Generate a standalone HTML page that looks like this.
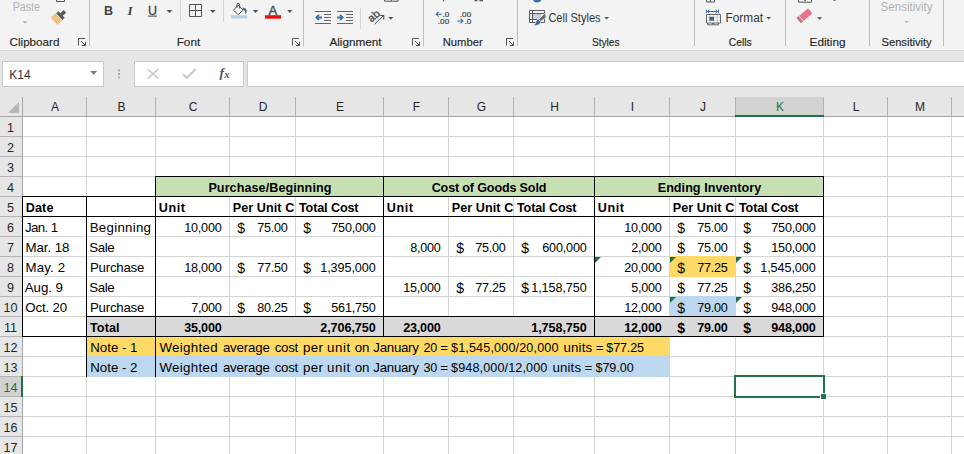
<!DOCTYPE html>
<html><head><meta charset="utf-8"><title>Book1 - Excel</title>
<style>
html,body{margin:0;padding:0;}
body{width:964px;height:454px;overflow:hidden;position:relative;background:#fff;font-family:"Liberation Sans",sans-serif;}
#ribbon{position:absolute;left:0;top:0;width:964px;height:50px;background:#f3f3f3;}
#rline{position:absolute;left:0;top:50px;width:964px;height:1px;background:#d9d9d9;}
#fbar{position:absolute;left:0;top:51px;width:964px;height:46px;background:#e6e6e6;}
.box{position:absolute;background:#fff;border:1px solid #c9c9c9;box-sizing:border-box;}
#grid{position:absolute;left:0;top:0;width:964px;height:454px;}
.hl,.vl,.f,.c,.ch,.rh{position:absolute;}
.hl{height:1px;background:#d4d4d4;}
.vl{width:1px;background:#d4d4d4;}
.k{background:#000;}
.c{height:19px;line-height:22px;font-size:13.3px;color:#000;white-space:pre;overflow:hidden;}
.c span{position:absolute;top:0;}
.b{font-weight:bold;font-size:12.6px;}
.n{font-size:12.6px;}
.d{font-size:14px;}
.ch{top:97px;height:19px;line-height:21px;font-size:12px;text-indent:1px;color:#262626;text-align:center;}
.rh{left:0;width:21px;height:19px;line-height:23px;font-size:12.6px;color:#262626;text-align:center;}
.tri{position:absolute;width:0;height:0;border-top:6px solid #1e7145;border-right:6px solid transparent;}
svg{position:absolute;left:0;top:0;}
</style></head><body>

<div id="ribbon"></div><div id="rline"></div><div id="fbar"></div>
<div class="box" style="left:2px;top:61px;width:102px;height:26px;"></div>
<div class="box" style="left:134px;top:61px;width:110px;height:26px;"></div>
<div class="box" style="left:247px;top:61px;width:730px;height:26px;"></div>
<div id="grid">
<div class="f" style="left:0;top:97px;width:964px;height:20px;background:#e6e6e6"></div>
<div class="f" style="left:0;top:117px;width:22px;height:340px;background:#e6e6e6"></div>
<div class="f" style="left:736px;top:97px;width:87px;height:18px;background:#d2d2d2"></div>
<div class="f" style="left:0;top:377px;width:21px;height:19px;background:#d2d2d2"></div>
<div class="f" style="left:8px;top:102px;width:0;height:0;border-bottom:11px solid #b7b7b7;border-left:11px solid transparent;"></div>
<div class="vl" style="left:86px;top:117px;height:340px"></div>
<div class="vl" style="left:155px;top:117px;height:340px"></div>
<div class="vl" style="left:229px;top:117px;height:340px"></div>
<div class="vl" style="left:295px;top:117px;height:340px"></div>
<div class="vl" style="left:383px;top:117px;height:340px"></div>
<div class="vl" style="left:448px;top:117px;height:340px"></div>
<div class="vl" style="left:513px;top:117px;height:340px"></div>
<div class="vl" style="left:594px;top:117px;height:340px"></div>
<div class="vl" style="left:669px;top:117px;height:340px"></div>
<div class="vl" style="left:735px;top:117px;height:340px"></div>
<div class="vl" style="left:823px;top:117px;height:340px"></div>
<div class="vl" style="left:887px;top:117px;height:340px"></div>
<div class="vl" style="left:951px;top:117px;height:340px"></div>
<div class="hl" style="left:23px;top:136px;width:941px"></div>
<div class="hl" style="left:23px;top:156px;width:941px"></div>
<div class="hl" style="left:23px;top:176px;width:941px"></div>
<div class="hl" style="left:23px;top:196px;width:941px"></div>
<div class="hl" style="left:23px;top:216px;width:941px"></div>
<div class="hl" style="left:23px;top:236px;width:941px"></div>
<div class="hl" style="left:23px;top:256px;width:941px"></div>
<div class="hl" style="left:23px;top:276px;width:941px"></div>
<div class="hl" style="left:23px;top:296px;width:941px"></div>
<div class="hl" style="left:23px;top:316px;width:941px"></div>
<div class="hl" style="left:23px;top:336px;width:941px"></div>
<div class="hl" style="left:23px;top:356px;width:941px"></div>
<div class="hl" style="left:23px;top:376px;width:941px"></div>
<div class="hl" style="left:23px;top:396px;width:941px"></div>
<div class="hl" style="left:23px;top:416px;width:941px"></div>
<div class="hl" style="left:23px;top:436px;width:941px"></div>
<div class="f" style="left:155px;top:176px;width:229px;height:21px;background:#c6e0b4"></div>
<div class="f" style="left:383px;top:176px;width:212px;height:21px;background:#c6e0b4"></div>
<div class="f" style="left:594px;top:176px;width:230px;height:21px;background:#c6e0b4"></div>
<div class="f" style="left:86px;top:316px;width:738px;height:21px;background:#d9d9d9"></div>
<div class="f" style="left:86px;top:336px;width:584px;height:21px;background:#ffd966"></div>
<div class="f" style="left:86px;top:356px;width:584px;height:21px;background:#bdd7ee"></div>
<div class="f" style="left:669px;top:256px;width:67px;height:21px;background:#ffd966"></div>
<div class="f" style="left:669px;top:296px;width:67px;height:21px;background:#bdd7ee"></div>
<div class="hl" style="left:0;top:116px;width:964px;background:#a6a6a6"></div>
<div class="vl" style="left:22px;top:97px;height:360px;background:#a6a6a6"></div>
<div class="vl" style="left:86px;top:97px;height:19px;background:#b4b4b4"></div>
<div class="vl" style="left:155px;top:97px;height:19px;background:#b4b4b4"></div>
<div class="vl" style="left:229px;top:97px;height:19px;background:#b4b4b4"></div>
<div class="vl" style="left:295px;top:97px;height:19px;background:#b4b4b4"></div>
<div class="vl" style="left:383px;top:97px;height:19px;background:#b4b4b4"></div>
<div class="vl" style="left:448px;top:97px;height:19px;background:#b4b4b4"></div>
<div class="vl" style="left:513px;top:97px;height:19px;background:#b4b4b4"></div>
<div class="vl" style="left:594px;top:97px;height:19px;background:#b4b4b4"></div>
<div class="vl" style="left:669px;top:97px;height:19px;background:#b4b4b4"></div>
<div class="vl" style="left:735px;top:97px;height:19px;background:#b4b4b4"></div>
<div class="vl" style="left:823px;top:97px;height:19px;background:#b4b4b4"></div>
<div class="vl" style="left:887px;top:97px;height:19px;background:#b4b4b4"></div>
<div class="vl" style="left:951px;top:97px;height:19px;background:#b4b4b4"></div>
<div class="hl" style="left:0;top:136px;width:22px;background:#b4b4b4"></div>
<div class="hl" style="left:0;top:156px;width:22px;background:#b4b4b4"></div>
<div class="hl" style="left:0;top:176px;width:22px;background:#b4b4b4"></div>
<div class="hl" style="left:0;top:196px;width:22px;background:#b4b4b4"></div>
<div class="hl" style="left:0;top:216px;width:22px;background:#b4b4b4"></div>
<div class="hl" style="left:0;top:236px;width:22px;background:#b4b4b4"></div>
<div class="hl" style="left:0;top:256px;width:22px;background:#b4b4b4"></div>
<div class="hl" style="left:0;top:276px;width:22px;background:#b4b4b4"></div>
<div class="hl" style="left:0;top:296px;width:22px;background:#b4b4b4"></div>
<div class="hl" style="left:0;top:316px;width:22px;background:#b4b4b4"></div>
<div class="hl" style="left:0;top:336px;width:22px;background:#b4b4b4"></div>
<div class="hl" style="left:0;top:356px;width:22px;background:#b4b4b4"></div>
<div class="hl" style="left:0;top:376px;width:22px;background:#b4b4b4"></div>
<div class="hl" style="left:0;top:396px;width:22px;background:#b4b4b4"></div>
<div class="hl" style="left:0;top:416px;width:22px;background:#b4b4b4"></div>
<div class="hl" style="left:0;top:436px;width:22px;background:#b4b4b4"></div>
<div class="f" style="left:735px;top:115px;width:89px;height:2px;background:#217346"></div>
<div class="f" style="left:21px;top:376px;width:2px;height:21px;background:#217346"></div>
<div class="hl k" style="left:155px;top:176px;width:669px"></div>
<div class="hl k" style="left:22px;top:196px;width:802px"></div>
<div class="hl k" style="left:22px;top:216px;width:802px"></div>
<div class="hl k" style="left:86px;top:316px;width:738px"></div>
<div class="hl k" style="left:22px;top:336px;width:802px"></div>
<div class="vl k" style="left:155px;top:176px;height:161px"></div>
<div class="vl k" style="left:383px;top:176px;height:161px"></div>
<div class="vl k" style="left:594px;top:176px;height:161px"></div>
<div class="vl k" style="left:823px;top:176px;height:161px"></div>
<div class="vl k" style="left:86px;top:196px;height:181px"></div>
<div class="vl k" style="left:155px;top:336px;height:41px"></div>
<div class="vl k" style="left:22px;top:196px;height:141px"></div>
<div class="ch" style="left:23px;width:63px;color:#262626">A</div>
<div class="ch" style="left:87px;width:68px;color:#262626">B</div>
<div class="ch" style="left:156px;width:73px;color:#262626">C</div>
<div class="ch" style="left:230px;width:65px;color:#262626">D</div>
<div class="ch" style="left:296px;width:87px;color:#262626">E</div>
<div class="ch" style="left:384px;width:64px;color:#262626">F</div>
<div class="ch" style="left:449px;width:64px;color:#262626">G</div>
<div class="ch" style="left:514px;width:80px;color:#262626">H</div>
<div class="ch" style="left:595px;width:74px;color:#262626">I</div>
<div class="ch" style="left:670px;width:65px;color:#262626">J</div>
<div class="ch" style="left:736px;width:87px;color:#217346">K</div>
<div class="ch" style="left:824px;width:63px;color:#262626">L</div>
<div class="ch" style="left:888px;width:63px;color:#262626">M</div>
<div class="ch" style="left:952px;width:63px;color:#262626">N</div>
<div class="rh" style="top:117px;color:#262626">1</div>
<div class="rh" style="top:137px;color:#262626">2</div>
<div class="rh" style="top:157px;color:#262626">3</div>
<div class="rh" style="top:177px;color:#262626">4</div>
<div class="rh" style="top:197px;color:#262626">5</div>
<div class="rh" style="top:217px;color:#262626">6</div>
<div class="rh" style="top:237px;color:#262626">7</div>
<div class="rh" style="top:257px;color:#262626">8</div>
<div class="rh" style="top:277px;color:#262626">9</div>
<div class="rh" style="top:297px;color:#262626">10</div>
<div class="rh" style="top:317px;color:#262626">11</div>
<div class="rh" style="top:337px;color:#262626">12</div>
<div class="rh" style="top:357px;color:#262626">13</div>
<div class="rh" style="top:377px;color:#217346">14</div>
<div class="rh" style="top:397px;color:#262626">15</div>
<div class="rh" style="top:417px;color:#262626">16</div>
<div class="rh" style="top:437px;color:#262626">17</div>
<div class="c b" style="left:156px;top:177px;width:227px;"><span style="left:52.40px;letter-spacing:0.074px;">Purchase/Beginning</span></div>
<div class="c b" style="left:384px;top:177px;width:210px;"><span style="left:47.70px;letter-spacing:-0.165px;">Cost of Goods Sold</span></div>
<div class="c b" style="left:595px;top:177px;width:228px;"><span style="left:62.70px;letter-spacing:0.040px;">Ending Inventory</span></div>
<div class="c b" style="left:23px;top:197px;width:63px;"><span style="left:2.70px;letter-spacing:0.133px;">Date</span></div>
<div class="c b" style="left:156px;top:197px;width:73px;"><span style="left:2.70px;letter-spacing:0.600px;">Unit</span></div>
<div class="c b" style="left:384px;top:197px;width:64px;"><span style="left:2.70px;letter-spacing:0.600px;">Unit</span></div>
<div class="c b" style="left:595px;top:197px;width:74px;"><span style="left:2.70px;letter-spacing:0.600px;">Unit</span></div>
<div class="c b" style="left:230px;top:197px;width:65px;"><span style="left:2.70px;letter-spacing:0.078px;">Per Unit C</span></div>
<div class="c b" style="left:449px;top:197px;width:64px;"><span style="left:2.70px;letter-spacing:0.078px;">Per Unit C</span></div>
<div class="c b" style="left:670px;top:197px;width:65px;"><span style="left:2.70px;letter-spacing:0.078px;">Per Unit C</span></div>
<div class="c b" style="left:296px;top:197px;width:87px;"><span style="left:2.90px;letter-spacing:-0.106px;">Total Cost</span></div>
<div class="c b" style="left:514px;top:197px;width:80px;"><span style="left:2.90px;letter-spacing:-0.106px;">Total Cost</span></div>
<div class="c b" style="left:736px;top:197px;width:87px;"><span style="left:2.90px;letter-spacing:-0.106px;">Total Cost</span></div>
<div class="c" style="left:23px;top:217px;width:63px;"><span style="left:1.90px;letter-spacing:-0.610px;">Jan. 1</span></div>
<div class="c" style="left:87px;top:217px;width:68px;"><span style="left:2.70px;letter-spacing:0.269px;">Beginning</span></div>
<div class="c" style="left:23px;top:237px;width:63px;"><span style="left:2.50px;letter-spacing:-0.058px;">Mar. 18</span></div>
<div class="c" style="left:87px;top:237px;width:68px;"><span style="left:2.30px;letter-spacing:-0.400px;">Sale</span></div>
<div class="c" style="left:23px;top:257px;width:63px;"><span style="left:2.50px;letter-spacing:0.130px;">May. 2</span></div>
<div class="c" style="left:87px;top:257px;width:68px;"><span style="left:3.00px;letter-spacing:-0.257px;">Purchase</span></div>
<div class="c" style="left:23px;top:277px;width:63px;"><span style="left:1.80px;letter-spacing:-0.070px;">Aug. 9</span></div>
<div class="c" style="left:87px;top:277px;width:68px;"><span style="left:2.30px;letter-spacing:-0.400px;">Sale</span></div>
<div class="c" style="left:23px;top:297px;width:63px;"><span style="left:2.30px;letter-spacing:-0.150px;">Oct. 20</span></div>
<div class="c" style="left:87px;top:297px;width:68px;"><span style="left:3.00px;letter-spacing:-0.257px;">Purchase</span></div>
<div class="c" style="left:156px;top:217px;width:73px;"><span class="n" style="left:28.20px;letter-spacing:-0.190px;">10,000</span></div>
<div class="c" style="left:230px;top:217px;width:65px;"><span class="d" style="left:7.30px;">$ </span><span class="n" style="left:27.20px;letter-spacing:-0.237px;">75.00</span></div>
<div class="c" style="left:296px;top:217px;width:87px;"><span class="d" style="left:7.30px;">$ </span><span class="n" style="left:35.20px;letter-spacing:-0.158px;">750,000</span></div>
<div class="c" style="left:156px;top:257px;width:73px;"><span class="n" style="left:28.20px;letter-spacing:-0.190px;">18,000</span></div>
<div class="c" style="left:230px;top:257px;width:65px;"><span class="d" style="left:7.30px;">$ </span><span class="n" style="left:27.20px;letter-spacing:-0.237px;">77.50</span></div>
<div class="c" style="left:296px;top:257px;width:87px;"><span class="d" style="left:7.30px;">$ </span><span class="n" style="left:24.20px;letter-spacing:-0.056px;">1,395,000</span></div>
<div class="c" style="left:156px;top:297px;width:73px;"><span class="n" style="left:35.20px;letter-spacing:-0.238px;">7,000</span></div>
<div class="c" style="left:230px;top:297px;width:65px;"><span class="d" style="left:7.30px;">$ </span><span class="n" style="left:27.20px;letter-spacing:-0.237px;">80.25</span></div>
<div class="c" style="left:296px;top:297px;width:87px;"><span class="d" style="left:7.30px;">$ </span><span class="n" style="left:35.20px;letter-spacing:-0.158px;">561,750</span></div>
<div class="c" style="left:384px;top:237px;width:64px;"><span class="n" style="left:26.20px;letter-spacing:-0.237px;">8,000</span></div>
<div class="c" style="left:449px;top:237px;width:64px;"><span class="d" style="left:7.30px;">$ </span><span class="n" style="left:26.20px;letter-spacing:-0.237px;">75.00</span></div>
<div class="c" style="left:514px;top:237px;width:80px;"><span class="d" style="left:7.30px;">$ </span><span class="n" style="left:28.20px;letter-spacing:-0.158px;">600,000</span></div>
<div class="c" style="left:384px;top:277px;width:64px;"><span class="n" style="left:19.20px;letter-spacing:-0.190px;">15,000</span></div>
<div class="c" style="left:449px;top:277px;width:64px;"><span class="d" style="left:7.30px;">$ </span><span class="n" style="left:26.20px;letter-spacing:-0.237px;">77.25</span></div>
<div class="c" style="left:514px;top:277px;width:80px;"><span class="d" style="left:7.30px;">$ </span><span class="n" style="left:17.20px;letter-spacing:-0.056px;">1,158,750</span></div>
<div class="c" style="left:595px;top:217px;width:74px;"><span class="n" style="left:29.20px;letter-spacing:-0.190px;">10,000</span></div>
<div class="c" style="left:670px;top:217px;width:65px;"><span class="d" style="left:7.30px;">$ </span><span class="n" style="left:27.20px;letter-spacing:-0.237px;">75.00</span></div>
<div class="c" style="left:736px;top:217px;width:87px;"><span class="d" style="left:7.30px;">$ </span><span class="n" style="left:35.20px;letter-spacing:-0.158px;">750,000</span></div>
<div class="c" style="left:595px;top:237px;width:74px;"><span class="n" style="left:36.20px;letter-spacing:-0.237px;">2,000</span></div>
<div class="c" style="left:670px;top:237px;width:65px;"><span class="d" style="left:7.30px;">$ </span><span class="n" style="left:27.20px;letter-spacing:-0.237px;">75.00</span></div>
<div class="c" style="left:736px;top:237px;width:87px;"><span class="d" style="left:7.30px;">$ </span><span class="n" style="left:35.20px;letter-spacing:-0.158px;">150,000</span></div>
<div class="c" style="left:595px;top:257px;width:74px;"><span class="n" style="left:29.20px;letter-spacing:-0.190px;">20,000</span></div>
<div class="c" style="left:670px;top:257px;width:65px;"><span class="d" style="left:7.30px;">$ </span><span class="n" style="left:27.20px;letter-spacing:-0.237px;">77.25</span></div>
<div class="c" style="left:736px;top:257px;width:87px;"><span class="d" style="left:7.30px;">$ </span><span class="n" style="left:24.20px;letter-spacing:-0.056px;">1,545,000</span></div>
<div class="c" style="left:595px;top:277px;width:74px;"><span class="n" style="left:36.20px;letter-spacing:-0.237px;">5,000</span></div>
<div class="c" style="left:670px;top:277px;width:65px;"><span class="d" style="left:7.30px;">$ </span><span class="n" style="left:27.20px;letter-spacing:-0.237px;">77.25</span></div>
<div class="c" style="left:736px;top:277px;width:87px;"><span class="d" style="left:7.30px;">$ </span><span class="n" style="left:35.20px;letter-spacing:-0.158px;">386,250</span></div>
<div class="c" style="left:595px;top:297px;width:74px;"><span class="n" style="left:29.20px;letter-spacing:-0.190px;">12,000</span></div>
<div class="c" style="left:670px;top:297px;width:65px;"><span class="d" style="left:7.30px;">$ </span><span class="n" style="left:27.20px;letter-spacing:-0.237px;">79.00</span></div>
<div class="c" style="left:736px;top:297px;width:87px;"><span class="d" style="left:7.30px;">$ </span><span class="n" style="left:35.20px;letter-spacing:-0.158px;">948,000</span></div>
<div class="c b" style="left:87px;top:317px;width:68px;"><span style="left:3.00px;letter-spacing:0.088px;">Total</span></div>
<div class="c b" style="left:156px;top:317px;width:73px;"><span class="n" style="left:28.20px;letter-spacing:-0.190px;">35,000</span></div>
<div class="c b" style="left:296px;top:317px;width:87px;"><span class="n" style="left:24.20px;letter-spacing:-0.056px;">2,706,750</span></div>
<div class="c b" style="left:384px;top:317px;width:64px;"><span class="n" style="left:19.20px;letter-spacing:-0.190px;">23,000</span></div>
<div class="c b" style="left:514px;top:317px;width:80px;"><span class="n" style="left:17.20px;letter-spacing:-0.056px;">1,758,750</span></div>
<div class="c b" style="left:595px;top:317px;width:74px;"><span class="n" style="left:29.20px;letter-spacing:-0.190px;">12,000</span></div>
<div class="c b" style="left:670px;top:317px;width:65px;"><span class="d" style="left:7.30px;">$ </span><span class="n" style="left:27.20px;letter-spacing:-0.237px;">79.00</span></div>
<div class="c b" style="left:736px;top:317px;width:87px;"><span class="d" style="left:7.30px;">$ </span><span class="n" style="left:35.20px;letter-spacing:-0.158px;">948,000</span></div>
<div class="c" style="left:87px;top:337px;width:68px;"><span style="left:3.30px;letter-spacing:-0.029px;">Note - 1</span></div>
<div class="c" style="left:87px;top:357px;width:68px;"><span style="left:3.30px;letter-spacing:-0.029px;">Note - 2</span></div>
<div class="c" style="left:156px;top:337px;width:513px;"><span style="left:3.50px;letter-spacing:0.307px;">Weighted </span><span style="left:66.90px;letter-spacing:-0.192px;">average </span><span style="left:118.70px;letter-spacing:-0.267px;">cost </span><span style="left:146.90px;letter-spacing:0.400px;">per </span><span style="left:171.00px;letter-spacing:0.583px;">unit </span><span style="left:198.70px;letter-spacing:-0.200px;">on </span><span style="left:217.30px;letter-spacing:-0.283px;">January </span><span class="n" style="left:267.40px;letter-spacing:-0.200px;">20 </span><span style="left:284.30px;">= </span><span class="n" style="left:295.00px;letter-spacing:0.150px;">$1,545,000/20,000 </span><span style="left:407.50px;letter-spacing:0.150px;">units </span><span style="left:439.70px;">= </span><span class="n" style="left:450.30px;letter-spacing:-0.150px;">$77.25</span></div>
<div class="c" style="left:156px;top:357px;width:513px;"><span style="left:3.50px;letter-spacing:0.307px;">Weighted </span><span style="left:66.90px;letter-spacing:-0.192px;">average </span><span style="left:118.70px;letter-spacing:-0.267px;">cost </span><span style="left:146.90px;letter-spacing:0.400px;">per </span><span style="left:171.00px;letter-spacing:0.583px;">unit </span><span style="left:198.70px;letter-spacing:-0.200px;">on </span><span style="left:217.30px;letter-spacing:-0.283px;">January </span><span class="n" style="left:267.40px;letter-spacing:-0.200px;">30 </span><span style="left:284.30px;">= </span><span class="n" style="left:295.00px;letter-spacing:0.129px;">$948,000/12,000 </span><span style="left:396.40px;letter-spacing:0.150px;">units </span><span style="left:428.60px;">= </span><span class="n" style="left:439.50px;letter-spacing:-0.070px;">$79.00</span></div>
<div class="tri" style="left:595px;top:257px"></div>
<div class="tri" style="left:670px;top:257px"></div>
<div class="tri" style="left:736px;top:257px"></div>
<div class="tri" style="left:670px;top:297px"></div>
<div class="tri" style="left:736px;top:297px"></div>
<div class="f" style="left:734px;top:375px;width:87px;height:19px;border:2px solid #217346;"></div>
<div class="f" style="left:820px;top:393px;width:5px;height:5px;background:#217346;border:1px solid #fff;"></div>
</div>
<svg width="964" height="97" viewBox="0 0 964 97" font-family="Liberation Sans, sans-serif">
<!-- group separators -->
<g stroke="#bdbdbd" stroke-width="1" shape-rendering="crispEdges">
<line x1="89.5" y1="0" x2="89.5" y2="46"/><line x1="303.5" y1="0" x2="303.5" y2="46"/><line x1="423.5" y1="0" x2="423.5" y2="46"/>
<line x1="517.5" y1="0" x2="517.5" y2="46"/><line x1="694.5" y1="0" x2="694.5" y2="46"/><line x1="785.5" y1="0" x2="785.5" y2="46"/>
<line x1="869.5" y1="0" x2="869.5" y2="46"/><line x1="943.5" y1="0" x2="943.5" y2="46"/>
</g>
<g stroke="#d4d4d4" stroke-width="1" shape-rendering="crispEdges">
<line x1="180.5" y1="0" x2="180.5" y2="21"/><line x1="223.5" y1="0" x2="223.5" y2="22"/><line x1="360.5" y1="8" x2="360.5" y2="29"/>
</g>
<!-- group labels -->
<g font-size="11.2" fill="#262626" stroke="#262626" stroke-width="0.15">
<text x="9.5" y="45.8" textLength="50" lengthAdjust="spacingAndGlyphs">Clipboard</text>
<text x="176.7" y="45.8" textLength="23.5" lengthAdjust="spacingAndGlyphs">Font</text>
<text x="329.4" y="45.8" textLength="52.2" lengthAdjust="spacingAndGlyphs">Alignment</text>
<text x="442.7" y="45.8" textLength="40" lengthAdjust="spacingAndGlyphs">Number</text>
<text x="591.9" y="45.8" textLength="27.6" lengthAdjust="spacingAndGlyphs">Styles</text>
<text x="728.7" y="45.8" textLength="23" lengthAdjust="spacingAndGlyphs">Cells</text>
<text x="809.6" y="45.8" textLength="36" lengthAdjust="spacingAndGlyphs">Editing</text>
<text x="881.5" y="45.8" textLength="50.2" lengthAdjust="spacingAndGlyphs">Sensitivity</text>
</g>
<!-- dialog launchers -->
<g fill="none" stroke="#555" stroke-width="1">
<g id="dl1" transform="translate(78,38)"><path d="M7 0.5H0.5V7.5"/><path d="M3 3L7.3 7.3M3.8 7.5H7.5V3.8"/></g>
<g transform="translate(292,38)"><path d="M7 0.5H0.5V7.5"/><path d="M3 3L7.3 7.3M3.8 7.5H7.5V3.8"/></g>
<g transform="translate(412,38)"><path d="M7 0.5H0.5V7.5"/><path d="M3 3L7.3 7.3M3.8 7.5H7.5V3.8"/></g>
<g transform="translate(506,38)"><path d="M7 0.5H0.5V7.5"/><path d="M3 3L7.3 7.3M3.8 7.5H7.5V3.8"/></g>
</g>
<!-- Clipboard group -->
<text x="12.7" y="10.9" font-size="12" fill="#b3b3b3" textLength="27.3" lengthAdjust="spacingAndGlyphs">Paste</text>
<path d="M22.3 21H27.7L25 23.8Z" fill="#bcbcbc"/>
<path d="M56.5 0V1.5H64.5V0" fill="none" stroke="#555" stroke-width="1"/>
<g transform="translate(57.9,17.9) rotate(47)">
<rect x="-1.8" y="-9.6" width="3.6" height="5" fill="#5a5a5a"/>
<rect x="-4.6" y="-5" width="9.2" height="3.2" fill="#5a5a5a"/>
<rect x="-5" y="-1.2" width="10" height="6.4" fill="#eec27c"/>
</g>
<!-- Font group -->
<text x="104" y="14.8" font-size="12.5" font-weight="bold" fill="#444">B</text>
<text x="127.5" y="14.8" font-size="13" font-weight="bold" font-style="italic" font-family="Liberation Serif, serif" fill="#444">I</text>
<text x="148" y="14.6" font-size="12.5" fill="#444" stroke="#444" stroke-width="0.3">U</text>
<rect x="148" y="15.6" width="9" height="1" fill="#444"/>
<g fill="#555">
<path d="M166.5 10H172.5L169.5 13Z"/>
<path d="M210 10H215.6L212.8 13Z"/>
<path d="M252.7 10H258.3L255.5 13Z"/>
<path d="M287.2 10H292.4L289.8 13Z"/>
<path d="M388.2 17H393.4L390.8 19.8Z"/>
<path d="M604.3 17H609.1L606.7 19.6Z"/>
<path d="M766.3 17H771.1L768.7 19.6Z"/>
<path d="M817 17.2H822.2L819.6 19.8Z"/>
</g>
<path d="M189.5 4.5H201.5V16.5H189.5ZM195.5 4.5V16.5M189.5 10.5H201.5" fill="none" stroke="#555" stroke-width="1"/>
<!-- fill bucket -->
<rect x="231" y="15.3" width="16.3" height="3.2" fill="#b9cfe4"/>
<path d="M238.2 5.2L243.2 10.2L238.2 14.6L233.4 10.2Z" fill="#fafafa" stroke="#555" stroke-width="1" stroke-linejoin="round"/>
<path d="M236.8 8V5Q236.8 3.3 238.2 3.3Q239.7 3.3 239.7 5V8.6" fill="none" stroke="#555" stroke-width="1"/>
<path d="M242.6 7.6Q246.6 8 246.8 11.2Q246.8 13.2 245.4 14.2Q245.6 10.6 242.6 9.6Z" fill="#4a6f94"/>
<!-- font color -->
<text x="268.6" y="14.8" font-size="13.5" fill="#505050" stroke="#505050" stroke-width="0.45" textLength="8.8" lengthAdjust="spacingAndGlyphs">A</text>
<rect x="265" y="15.2" width="16" height="3.5" fill="#e31212"/>
<!-- Alignment -->
<g stroke="#666" stroke-width="1" shape-rendering="crispEdges">
<path d="M315 11.5H331M324 14.5H331M324 17.5H331M324 20.5H331M315 23.5H331"/>
<path d="M337 11.5H353M346 14.5H353M346 17.5H353M346 20.5H353M337 23.5H353"/>
</g>
<path d="M322 16.6H318.4L320 14.8H317.8L315 17.5L317.8 20.2H320L318.4 18.4H322Z" fill="#3d6ea5"/>
<path d="M337 16.6H340.6L339 14.8H341.2L344 17.5L341.2 20.2H339L340.6 18.4H337Z" fill="#3d6ea5"/>
<text transform="translate(371.6,22.8) rotate(-42)" font-size="11" fill="#444" stroke="#444" stroke-width="0.25">ab</text>
<path d="M374.6 24.2L383.4 15.6M379.6 15.4H383.8V19.6" fill="none" stroke="#444" stroke-width="1"/>
<path d="M384.5 0V1.2H398V0M391.3 0V1.2" fill="none" stroke="#555" stroke-width="1"/>
<!-- Number -->
<g font-size="7.8" fill="#444" stroke="#444" stroke-width="0.2">
<text x="442.4" y="16.8" textLength="6.8" lengthAdjust="spacingAndGlyphs">.0</text>
<text x="437.8" y="23.6" textLength="11.4" lengthAdjust="spacingAndGlyphs">.00</text>
<text x="459.8" y="16.8" textLength="11.4" lengthAdjust="spacingAndGlyphs">.00</text>
<text x="464.4" y="23.6" textLength="6.8" lengthAdjust="spacingAndGlyphs">.0</text>
</g>
<path d="M441.8 14.3H436.4M438.6 12L436.2 14.3L438.6 16.6" fill="none" stroke="#3d6ea5" stroke-width="1.1"/>
<path d="M457.2 21H462.8M460.6 18.7L463 21L460.6 23.3" fill="none" stroke="#3d6ea5" stroke-width="1.1"/>
<path d="M443.5 0V1.4" stroke="#555" stroke-width="1.2"/>
<path d="M474.5 0.6H477.5M479.5 0.6H483" stroke="#555" stroke-width="1.2"/>
<!-- Styles -->
<path d="M533 0H541.2Q540.6 2.4 537 2.6Q534 2.6 533 0Z" fill="#3b6ea0"/>
<rect x="532.5" y="13" width="8.5" height="7" fill="#c6ced7"/>
<path d="M529.5 10.5H544.5V22.5H529.5ZM532.5 10.5V22.5M529.5 13.5H544.5M529.5 19.5H538" fill="none" stroke="#5a5a5a" stroke-width="1"/>
<path d="M545.6 12.6L546 17.6L540.6 21.4L538.6 19.4Z" fill="#666" stroke="#f3f3f3" stroke-width="0.8"/>
<path d="M538.4 19.2L540.8 21.6Q540.6 25 536 25.4Q534.2 25.4 533.2 25.2Q536.4 23.6 536 21.2Q536.6 19.4 538.4 19.2Z" fill="#3b6ea0" stroke="#f3f3f3" stroke-width="0.6"/>
<text x="548.4" y="22.3" font-size="12" fill="#333" textLength="52.2" lengthAdjust="spacingAndGlyphs">Cell Styles</text>
<!-- Cells -->
<path d="M706.5 0V2H714.5V0M710.5 0V2" fill="none" stroke="#555" stroke-width="1"/>
<path d="M706.4 9.6V13.4M718.6 9.6V13.4M707.4 11.5H717.6M709.4 9.8L707.4 11.5L709.4 13.2M715.6 9.8L717.6 11.5L715.6 13.2" fill="none" stroke="#3d6ea5" stroke-width="1"/>
<rect x="706.5" y="14.5" width="14" height="8.6" fill="#fff"/>
<path d="M710 14.5V23M713.6 14.5V23M717.2 14.5V23M706.5 17.3H720.5M706.5 20.3H720.5" fill="none" stroke="#c9c9c9" stroke-width="1"/>
<rect x="709.4" y="16.8" width="4.6" height="3.8" fill="#2d6b7f"/>
<path d="M706.5 14.5H720.5V23H706.5ZM707.5 23V24.8H712.5V23M713.5 23V24.8H718.5V23" fill="none" stroke="#666" stroke-width="1"/>
<text x="725.6" y="22.3" font-size="12" fill="#333" textLength="37.4" lengthAdjust="spacingAndGlyphs">Format</text>
<!-- Editing -->
<path d="M798.5 0V2.2H811.5V0" fill="none" stroke="#555" stroke-width="1"/><rect x="804.3" y="0" width="1.6" height="1" fill="#555"/>
<rect x="833.6" y="0" width="1.8" height="0.9" fill="#555"/>
<g transform="translate(804.6,15.6) rotate(-40)">
<rect x="-7.6" y="-3.3" width="15" height="6.6" rx="0.8" fill="#e8728e"/>
<rect x="-7.6" y="-3.3" width="2.6" height="6.6" fill="#b97a88"/>
<rect x="-5" y="-3.3" width="1" height="6.6" fill="#f6d5dc"/>
</g>
<!-- Sensitivity -->
<text x="880.6" y="11" font-size="12" fill="#b3b3b3" textLength="52" lengthAdjust="spacingAndGlyphs">Sensitivity</text>
<path d="M904 21H909L906.5 23.6Z" fill="#c0c0c0"/>
<!-- formula bar -->
<text x="9.3" y="78.6" font-size="12" fill="#333" textLength="21.4" lengthAdjust="spacingAndGlyphs">K14</text>
<path d="M90.2 71H97.2L93.7 74.8Z" fill="#777"/>
<g fill="#a9a9a9"><rect x="118" y="69.5" width="2" height="2"/><rect x="118" y="73" width="2" height="2"/><rect x="118" y="76.5" width="2" height="2"/></g>
<path d="M147.8 69.2L158.2 78.6M158.2 69.2L147.8 78.6" stroke="#c3c3c3" stroke-width="1.4" fill="none"/>
<path d="M183 74.2L186.8 78L195.6 69.2" stroke="#c3c3c3" stroke-width="1.9" fill="none"/>
<text x="219.6" y="77" font-size="13.5" font-style="italic" font-weight="bold" font-family="Liberation Serif, serif" fill="#555"><tspan>f</tspan><tspan font-size="10.5" dx="0.2" dy="1">x</tspan></text>
</svg>

</body></html>
